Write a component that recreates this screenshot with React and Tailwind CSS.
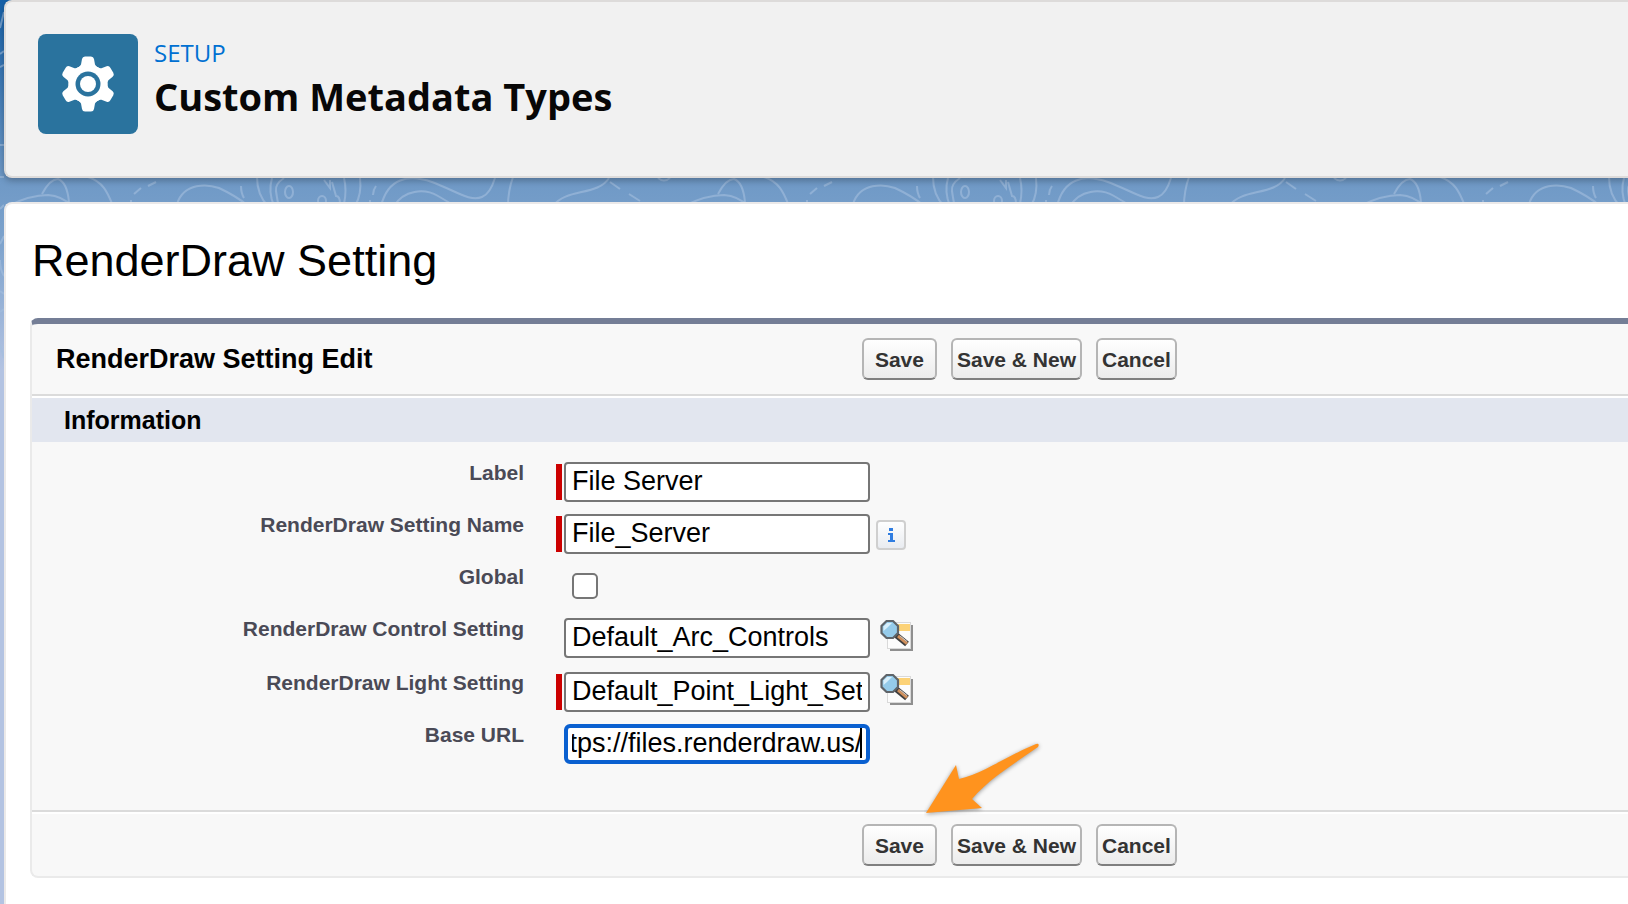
import { useEffect, useRef } from "react";

const TILE = (
  <g fill="none" stroke="#a3bedd" strokeOpacity="0.6" strokeWidth="2" transform="translate(-4 0)">
    <path d="M8 46 Q30 35 48 35 Q62 36 72 46" />
    <path d="M42 34 Q50 19 58 19 Q67 22 69 42" />
    <path d="M88 17 C104 22 108 34 113 46" />
    <path d="M134 34 l7 -6 M148 26 l8 -4 M131 40 v4" />
    <path d="M177 44 C184 22 208 24 219 28 Q236 36 247 45" />
    <path d="M241 26 q0 7 3 12 M257 17 q0 18 11 29 M272 18 q-4 14 2 28" />
    <path d="M284 18 q-9 6 -8 13 t2 12" />
    <ellipse cx="289" cy="32" rx="4" ry="6" />
    <path d="M324 20 l6 8 v-8 M332 22 l4 14 q4 0 4 8 M344 18 q3 12 0 26" />
    <ellipse cx="322" cy="41" rx="4" ry="5" />
    <path d="M360 18 q2 16 -5 28 M376 26 q-3 4 -3 9 M370 40 v4" />
    <path d="M381 46 C388 18 408 14 432 22 C456 31 470 42 482 37 Q490 34 495 18" />
    <path d="M394 46 C404 30 424 28 438 36 L455 46" />
    <path d="M513 17 q-5 14 -5 29" />
    <path d="M553 46 C566 28 598 36 609 18" />
    <path d="M610 22 l10 7 M629 34 l11 7" />
    <path d="M658 18 q6 5 12 0" />
  </g>
);

function Backdrop() {
  return (
    <svg aria-hidden="true" className="h-6 w-full">
      <defs>
        <pattern id="contours" width="676" height="60" patternUnits="userSpaceOnUse" patternTransform="translate(0 -18)">
          {TILE}
        </pattern>
      </defs>
      <rect width="100%" height="100%" fill="url(#contours)" />
    </svg>
  );
}

function EdgeLines() {
  return (
    <svg aria-hidden="true" className="absolute top-0 left-0 h-[380px] w-1">
      <g fill="none" stroke="#a3bedd" strokeOpacity="0.6" strokeWidth="2">
        <path d="M0 28L4 12M0 54L4 51M0 67L4 65M0 145H4M0 177H4M0 209L4 205M0 244L4 236M0 260Q0 270 4 276M0 291L4 294M0 312L4 309M0 345L4 358" />
      </g>
    </svg>
  );
}

function GearIcon() {
  return (
    <svg viewBox="0 0 100 100" className="size-full" aria-hidden="true">
      <g fill="#fff">
        {[0, 60, 120, 180, 240, 300].map((a) => (
          <path key={a} transform={`rotate(${a} 50 50)`} d="M47 22.500H53Q55.500 22.500 56 25L57 30.500Q58 33 61 34V42H39V34Q42 33 43 30.500L44 25Q44.500 22.500 47 22.500Z" />
        ))}
        <circle cx="50" cy="50" r="19.500" />
      </g>
      <circle cx="50" cy="50" r="12.500" fill="#2a739e" />
      <circle cx="50" cy="50" r="8" fill="#fff" />
    </svg>
  );
}

function LookupIcon() {
  return (
    <svg viewBox="0 0 34 34" className="size-[34px]" aria-hidden="true">
      <path d="M10 6H33V32H10Z" fill="#8f8f8f" />
      <rect x="7.500" y="3.500" width="23" height="26" fill="#fcfcfc" stroke="#d9d9d9" />
      <rect x="17" y="5" width="13" height="7" fill="#fcd277" />
      <path d="M16 16L27 25" stroke="#3f3f3f" strokeWidth="6" />
      <path d="M18 17L27 24.500" stroke="#cf8f5c" strokeWidth="3" />
      <path d="M20 17L27 22.500" stroke="#c9c9c9" strokeWidth="1" />
      <path d="M6.500 2H13L18 7V14L13 19H6.500L1.500 14V7Z" fill="#95cbea" stroke="#5f6469" strokeWidth="2.200" />
      <path d="M7 4H12L7 9L3.500 12V7.500Z" fill="#d8effb" />
    </svg>
  );
}

function InfoIcon() {
  return (
    <svg viewBox="0 0 30 30" className="size-[30px]" aria-hidden="true">
      <defs>
        <linearGradient id="info" x2="0" y2="1">
          <stop stopColor="#fff" />
          <stop offset="1" stopColor="#e8ebf0" />
        </linearGradient>
      </defs>
      <rect x="1" y="1" width="28" height="28" rx="3" fill="url(#info)" stroke="#cfcfcf" strokeWidth="2" />
      <path d="M13 8h4v3h-4zM12 13h5v7h2v2h-7v-2h2v-5h-2z" fill="#2f7de1" />
    </svg>
  );
}

function Buttons() {
  return (
    <div className="flex gap-3.5">
      {["Save", "Save & New", "Cancel"].map((text) => (
        <button
          key={text}
          type="button"
          className={`h-[42px] whitespace-nowrap rounded-md border-2 border-[#b5b5b5] border-b-[#7f7f7f] bg-linear-to-b from-white to-[#ececec] text-[21px] leading-none font-bold text-[#333] ${text === "Save" ? "px-[11px]" : "px-1"}`}
        >
          {text}
        </button>
      ))}
    </div>
  );
}

const FIELDS = [
  { id: "label", label: "Label", value: "File Server", required: true },
  { id: "name", label: "RenderDraw Setting Name", value: "File_Server", required: true, info: true },
  { id: "global", label: "Global", checkbox: true },
  { id: "control", label: "RenderDraw Control Setting", value: "Default_Arc_Controls", lookup: true },
  { id: "light", label: "RenderDraw Light Setting", value: "Default_Point_Light_Setting", required: true, lookup: true },
  { id: "url", label: "Base URL", value: "https://files.renderdraw.us/", active: true },
];

function Field({ field }) {
  const ref = useRef(null);
  useEffect(() => {
    if (field.active) ref.current.scrollLeft = ref.current.scrollWidth;
  }, [field.active]);

  return (
    <div className="grid grid-cols-[492px_minmax(0,1fr)] gap-x-8">
      <label htmlFor={field.id} className="text-right text-[21px] leading-[22px] font-bold text-[#4a4a56]">
        {field.label}
      </label>
      {field.checkbox ? (
        <div className="flex h-10 items-center pl-4">
          <input id={field.id} type="checkbox" className="size-[26px] appearance-none rounded-[5px] border-2 border-[#767676] bg-white" />
        </div>
      ) : (
        <div className={`flex items-center ${field.lookup && !field.required ? "pb-0.5" : ""}`}>
          <span className={`mr-0.5 h-9 w-1.5 ${field.required ? "bg-[#c00]" : ""}`} />
          <span className="relative flex">
            <input
              ref={ref}
              id={field.id}
              type="text"
              defaultValue={field.value}
              className={`h-10 w-[306px] bg-white text-[27px] leading-8 text-black outline-none ${field.active ? "rounded-md border-4 border-[#0a60d0] px-1 pb-0.5" : "rounded border-2 border-[#767676] px-1.5 pb-0.5"}`}
            />
            {field.active && <span className="absolute top-1 right-2 h-[30px] w-0.5 bg-black" />}
          </span>
          {field.info && (
            <button type="button" aria-label="Information" className="mt-0.5 ml-1.5">
              <InfoIcon />
            </button>
          )}
          {field.lookup && (
            <button type="button" aria-label={`${field.label} Lookup`} className="ml-2.5 -mt-1">
              <LookupIcon />
            </button>
          )}
        </div>
      )}
    </div>
  );
}

export default function App() {
  return (
    <div className="relative flex min-h-screen flex-col overflow-hidden bg-[linear-gradient(#1560a8_0px,#6f99c6_180px,#7ca2cc_240px,#b3c3e2_370px)] pl-1 font-['Liberation_Sans',Arial,sans-serif] text-black">
      <EdgeLines />
      <header className="relative flex items-start gap-4 rounded-l-lg border-2 border-r-0 border-[#dddbda] bg-[#f1f1f1] px-8 pt-8 pb-[42px] shadow-[0_3px_6px_rgba(0,0,0,0.25)]">
        <div className="size-[100px] shrink-0 rounded-lg bg-[#2a739e]">
          <GearIcon />
        </div>
        <div className="pt-[3px] font-['Open_Sans','Noto_Sans',sans-serif]">
          <p className="text-2xl leading-8 text-[#0070d2]">SETUP</p>
          <h1 className="text-[38px] leading-[54px] font-bold text-[#080707]">Custom Metadata Types</h1>
        </div>
      </header>
      <Backdrop />
      <main className="flex-1 rounded-tl-lg border-t-2 border-l-2 border-[#ebe9e9] bg-white pl-6">
        <h2 className="pt-8 pl-0.5 text-[45px] leading-[50px]">RenderDraw Setting</h2>
        <form className="mt-8 rounded-l-lg border-t-6 border-b-2 border-l-2 border-[#eaeaea] border-t-[#747e96] bg-[#f8f8f8]">
          <div className="flex items-center border-b-2 border-[#dbdbdb] py-3.5">
            <h3 className="w-[52%] pl-6 text-[27px] leading-8 font-bold">RenderDraw Setting Edit</h3>
            <Buttons />
          </div>
          <h4 className="border-t-2 border-white bg-[#e2e6ef] pl-8 text-[25px] leading-[44px] font-bold">Information</h4>
          <div className="flex flex-col gap-3 pt-5 pb-[46px]">
            {FIELDS.map((f) => (
              <Field key={f.id} field={f} />
            ))}
          </div>
          <div className="relative border-t-2 border-[#dbdbdb]">
            <div className="flex border-t-2 border-white py-2.5 pl-[52%]">
              <Buttons />
            </div>
            <svg viewBox="0 0 120 80" className="absolute -top-[72px] left-[56%] -ml-0.5 h-20 w-[120px]" aria-hidden="true">
              <path
                d="M2 73L32 25L35 39C58 34 85 15 112 4Q116 3 114 7C90 24 66 38 48 59L58 68Z"
                fill="#ff931e"
                className="drop-shadow-[0_1px_2px_rgba(0,0,0,0.4)]"
              />
            </svg>
          </div>
        </form>
      </main>
    </div>
  );
}
